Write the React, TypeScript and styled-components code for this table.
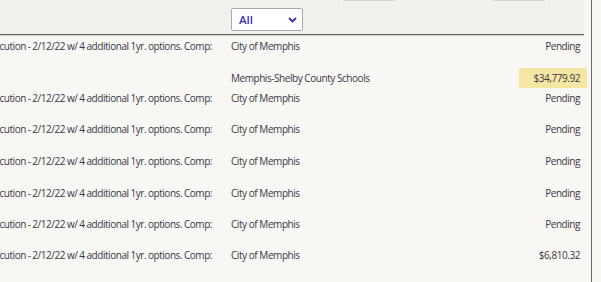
import styled, { createGlobalStyle } from "styled-components";

const GlobalStyle = createGlobalStyle`
  html, body {
    margin: 0;
    padding: 0;
    background: #f8f7f4;
  }
`;

const Page = styled.div`
  width: 601px;
  height: 282px;
  overflow: hidden;
  background: #f8f7f4;
  font-family: "Open Sans", "Noto Sans", sans-serif;
  font-size: 10px;
  letter-spacing: -0.45px;
  color: #3a3745;
`;

const Frame = styled.div`
  width: 591px;
  height: 100%;
  border-right: 1px solid #6a6a6a;
`;

const Header = styled.div`
  width: 584px;
  height: 34px;
  background: #f2f1ed;
  border-bottom: 1px solid #5e5e5e;
  box-shadow: 0 1px 0 #d6d4d0;
  display: flex;
  flex-direction: column;
`;

const TopStrip = styled.div`
  display: flex;
  height: 2px;
`;

const Stub = styled.div<{ $left: number }>`
  margin-left: ${({ $left }) => $left}px;
  width: 52px;
  height: 1px;
  background: #d2d1cf;
`;

const FilterRow = styled.div`
  display: flex;
  padding: 6px 0 0 231px;
`;

const SelectBox = styled.div`
  width: 72px;
  height: 23px;
  box-sizing: border-box;
  background: #ffffff;
  border: 1px solid #a9a9a9;
  border-radius: 2px;
  display: flex;
  align-items: center;
  justify-content: space-between;
  padding: 0 5px 0 7px;
  color: #3434b4;
  font-size: 11.5px;
  font-weight: 600;
  letter-spacing: 0;
`;

const Body = styled.div`
  display: flex;
  flex-direction: column;
  padding-top: 1px;
`;

const Row = styled.div<{ $top: number; $bottom: number }>`
  display: grid;
  grid-template-columns: 212px 1fr 68px;
  column-gap: 19px;
  width: 587px;
  padding-top: ${({ $top }) => $top}px;
  padding-bottom: ${({ $bottom }) => $bottom}px;
  line-height: 14px;
`;

const DescCell = styled.div`
  display: flex;
  justify-content: flex-end;
  overflow: hidden;
  white-space: nowrap;
  word-spacing: -0.3px;
`;

const Cell = styled.div`
  white-space: nowrap;
`;

const AmountCell = styled.div<{ $highlight?: boolean }>`
  text-align: right;
  padding-right: 7px;
  white-space: nowrap;
  background: ${({ $highlight }) => ($highlight ? "#f6e6a4" : "transparent")};
  margin: ${({ $highlight }) => ($highlight ? "-3px 0" : "0")};
  padding-top: ${({ $highlight }) => ($highlight ? "3px" : "0")};
  padding-bottom: ${({ $highlight }) => ($highlight ? "3px" : "0")};
`;

const DESC = "Contract Execution - 2/12/22 w/ 4 additional 1yr. options. Comp:";

const rows = [
  { desc: DESC, agency: "City of Memphis", amount: "Pending", top: 3, bottom: 5 },
  { desc: "", agency: "Memphis-Shelby County Schools", amount: "$34,779.92", top: 13, bottom: 3, highlight: true },
  { desc: DESC, agency: "City of Memphis", amount: "Pending", top: 3, bottom: 3 },
  { desc: DESC, agency: "City of Memphis", amount: "Pending", top: 14, bottom: 4 },
  { desc: DESC, agency: "City of Memphis", amount: "Pending", top: 14, bottom: 4 },
  { desc: DESC, agency: "City of Memphis", amount: "Pending", top: 14, bottom: 3 },
  { desc: DESC, agency: "City of Memphis", amount: "Pending", top: 14, bottom: 3 },
  { desc: DESC, agency: "City of Memphis", amount: "$6,810.32", top: 14, bottom: 4 },
];

const Chevron = () => (
  <svg width="9" height="6" viewBox="0 0 9 6">
    <path d="M1 1 L4.5 4.5 L8 1" fill="none" stroke="#3434b4" strokeWidth="1.8" />
  </svg>
);

const App = () => {
  return (
    <Page>
      <GlobalStyle />
      <Frame>
        <Header>
          <TopStrip>
            <Stub $left={343} />
            <Stub $left={98} />
          </TopStrip>
          <FilterRow>
            <SelectBox>
              All
              <Chevron />
            </SelectBox>
          </FilterRow>
        </Header>
        <Body>
          {rows.map((row, i) => (
            <Row key={i} $top={row.top} $bottom={row.bottom}>
              <DescCell>{row.desc}</DescCell>
              <Cell>{row.agency}</Cell>
              <AmountCell $highlight={row.highlight}>{row.amount}</AmountCell>
            </Row>
          ))}
        </Body>
      </Frame>
    </Page>
  );
};

export default App;
